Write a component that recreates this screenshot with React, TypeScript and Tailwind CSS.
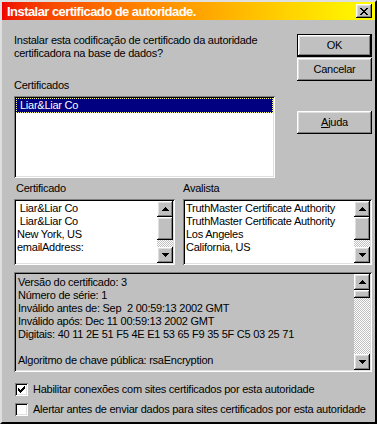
import type { ReactNode } from "react";

const raised =
  "shadow-[inset_-1px_-1px_0_#000,inset_1px_1px_0_#fff,inset_-2px_-2px_0_#808080,inset_2px_2px_0_#dfdfdf]";
const sunken =
  "shadow-[inset_1px_1px_0_#808080,inset_-1px_-1px_0_#fff,inset_2px_2px_0_#000,inset_-2px_-2px_0_#dfdfdf]";
const dither =
  "bg-[repeating-conic-gradient(#fff_0_25%,#c0c0c0_0_50%)] bg-[length:2px_2px]";

function Arrow({ up }: { up?: boolean }) {
  return (
    <div className={`flex h-[16px] w-[16px] items-center justify-center bg-[#c0c0c0] ${raised}`}>
      <svg width="7" height="4" viewBox="0 0 7 4">
        {up ? <path d="M3 0h1v1h1v1h1v1h1v1H0V3h1V2h1V1h1z" /> : <path d="M0 0h7v1H6v1H5v1H4v1H3V3H2V2H1V1H0z" />}
      </svg>
    </div>
  );
}

function ScrollBar({ thumb }: { thumb: number }) {
  return (
    <div className="flex w-[16px] flex-col">
      <Arrow up />
      <div className={`flex flex-1 flex-col ${dither}`}>
        <div className={`bg-[#c0c0c0] ${raised}`} style={{ height: thumb }} />
      </div>
      <Arrow />
    </div>
  );
}

function Button({ children, def }: { children: ReactNode; def?: boolean }) {
  return (
    <div className={`h-[23px] w-[75px] ${def ? "border border-black" : ""}`}>
      <div className={`flex h-full w-full items-center justify-center bg-[#c0c0c0] ${raised}`}>
        {children}
      </div>
    </div>
  );
}

function CheckBox({ checked, label }: { checked?: boolean; label: string }) {
  return (
    <div className="flex items-center gap-[5px] pl-[1px]">
      <div className={`flex h-[13px] w-[13px] shrink-0 items-center justify-center bg-white ${sunken}`}>
        {checked && (
          <svg width="7" height="7" viewBox="0 0 7 7">
            <path d="M6 0h1v3H6v1H5v1H4v1H3v1H2V6H1V5H0V2h1v1h1v1h1V3h1V2h1V1h1z" />
          </svg>
        )}
      </div>
      <span className="whitespace-nowrap">{label}</span>
    </div>
  );
}

export default function App() {
  return (
    <div
      className="h-[424px] w-[377px] border-2 border-t-[#dfdfdf] border-l-[#dfdfdf] border-r-black border-b-black bg-[#c0c0c0] text-[11px] leading-[13px] tracking-[-0.25px] text-black"
      style={{ fontFamily: '"Liberation Sans", Arial, sans-serif' }}
    >
      <div className="flex h-[18px] items-center justify-between bg-gradient-to-r from-[#f00000] to-[#ffff00] pl-[5px] pr-[3px]">
        <span className="text-[13px] font-bold tracking-[-0.55px] text-white">Instalar certificado de autoridade.</span>
        <div className={`flex h-[14px] w-[16px] items-center justify-center bg-[#c0c0c0] ${raised}`}>
          <svg width="8" height="7" viewBox="0 0 8 7">
            <path d="M0 0h2v1h1v1h2V1h1V0h2v1H7v1H6v1H5v1h1v1h1v1h1v1H6V6H5V5H3v1H2v1H0V6h1V5h1V4h1V3H2V2H1V1H0z" />
          </svg>
        </div>
      </div>

      <div className="flex flex-col pl-[12px] pr-[3px]">
        <div className="flex justify-between pt-[14px]">
          <div className="flex w-[261px] flex-col">
            <p>
              Instalar esta codificação de certificado da autoridade
              <br />
              certificadora na base de dados?
            </p>
            <p className="mt-[19px]">Certificados</p>
            <div className={`mt-[4px] h-[82px] bg-white p-[2px] ${sunken}`}>
              <div className="border border-dotted border-[#ffff80] bg-[#000080] pl-[3px] text-white">
                Liar&amp;Liar Co
              </div>
            </div>
          </div>
          <div className="flex flex-col">
            <Button def>OK</Button>
            <div className="mt-[1px]">
              <Button>Cancelar</Button>
            </div>
            <div className="mt-[30px]">
              <Button>
                <span>
                  <span className="underline">A</span>juda
                </span>
              </Button>
            </div>
          </div>
        </div>

        <div className="mt-[4px] flex gap-[8px]">
          <div className="flex w-[161px] flex-col">
            <p className="pl-[2px]">Certificado</p>
            <div className={`mt-[4px] flex h-[66px] bg-white p-[2px] ${sunken}`}>
              <div className="flex-1 whitespace-pre pl-[1px] pt-[1px]">
                {" Liar&Liar Co\n Liar&Liar Co\nNew York, US\nemailAddress:"}
              </div>
              <ScrollBar thumb={23} />
            </div>
          </div>
          <div className="flex flex-1 flex-col">
            <p>Avalista</p>
            <div className={`mt-[4px] flex h-[66px] bg-white p-[2px] ${sunken}`}>
              <div className="flex-1 whitespace-pre pl-[1px] pt-[1px]">
                {"TruthMaster Certificate Authority\nTruthMaster Certificate Authority\nLos Angeles\nCalifornia, US"}
              </div>
              <ScrollBar thumb={23} />
            </div>
          </div>
        </div>

        <div className={`mt-[7px] flex h-[100px] bg-[#c0c0c0] p-[2px] ${sunken}`}>
          <div className="flex-1 whitespace-pre pl-[2px] pt-[2px]">
            {
              "Versão do certificado: 3\nNúmero de série: 1\nInválido antes de: Sep  2 00:59:13 2002 GMT\nInválido após: Dec 11 00:59:13 2002 GMT\nDigitais: 40 11 2E 51 F5 4E E1 53 65 F9 35 5F C5 03 25 71\n\nAlgoritmo de chave pública: rsaEncryption"
            }
          </div>
          <ScrollBar thumb={8} />
        </div>

        <div className="mt-[11px] flex flex-col gap-[7px]">
          <CheckBox checked label="Habilitar conexões com sites certificados por esta autoridade" />
          <CheckBox label="Alertar antes de enviar dados para sites certificados por esta autoridade" />
        </div>
      </div>
    </div>
  );
}
